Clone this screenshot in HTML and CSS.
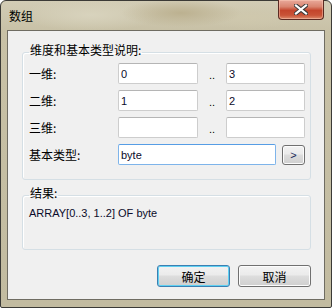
FILE: index.html
```html
<!DOCTYPE html>
<html lang="zh">
<head>
    <meta charset="UTF-8">
    <title>数组</title>
    <link rel="stylesheet" href="styles.css">
</head>
<body>
    <div class="window">
        <!-- Title bar -->
        <header class="titlebar">
            <span class="title">数组</span>
            <button class="close-btn" aria-label="关闭">
                <svg width="14" height="11" viewBox="0 0 14 11">
                    <path d="M2 1.5 L12 9.5 M12 1.5 L2 9.5" stroke="#3a3a3a" stroke-width="4.2" stroke-linecap="square"/>
                    <path d="M2 1.5 L12 9.5 M12 1.5 L2 9.5" stroke="#ffffff" stroke-width="2.2" stroke-linecap="square"/>
                </svg>
            </button>
        </header>

        <!-- Client area -->
        <main class="client">
            <fieldset class="group">
                <legend>维度和基本类型说明:</legend>
                <div class="dim-grid">
                    <label>一维:</label>
                    <input class="box" type="text" value="0">
                    <span class="dots">..</span>
                    <input class="box" type="text" value="3">

                    <label>二维:</label>
                    <input class="box" type="text" value="1">
                    <span class="dots">..</span>
                    <input class="box" type="text" value="2">

                    <label>三维:</label>
                    <input class="box" type="text" value="">
                    <span class="dots">..</span>
                    <input class="box" type="text" value="">

                    <label>基本类型:</label>
                    <div class="type-row">
                        <input class="box focused" type="text" value="byte">
                        <button class="btn small-btn">&gt;</button>
                    </div>
                </div>
            </fieldset>

            <fieldset class="group result">
                <legend>结果:</legend>
                <p class="result-text">ARRAY[0..3, 1..2] OF byte</p>
            </fieldset>

            <div class="actions">
                <button class="btn default-btn">确定</button>
                <button class="btn">取消</button>
            </div>
        </main>
    </div>
</body>
</html>
```

FILE: styles.css
```css
/* General styles */
body {
    margin: 0;
    font-family: "Noto Sans CJK SC", sans-serif;
    font-size: 12px;
    color: #000;
}

/* Window frame */
.window {
    width: 332px;
    height: 308px;
    box-sizing: border-box;
    border: 1px solid #3b3a36;
    border-radius: 6px 6px 2px 2px;
    padding: 0 6px 7px 6px;
    display: flex;
    flex-direction: column;
    background:
        radial-gradient(ellipse 60px 14px at 180px 12px, #bcb190 0%, rgba(188, 177, 144, 0) 100%),
        radial-gradient(ellipse 70px 16px at 90px 14px, #d8d3bd 0%, rgba(216, 211, 189, 0) 100%),
        radial-gradient(ellipse 50px 12px at 250px 16px, #cfc8ad 0%, rgba(207, 200, 173, 0) 100%),
        linear-gradient(#d2ccb5, #c8c1a6 30px, #c2bba0);
}

/* Title bar */
.titlebar {
    height: 29px;
    display: flex;
    align-items: flex-start;
}

.title {
    margin: 7px 0 0 2px;
    line-height: 16px;
    font-size: 12px;
}

.close-btn {
    margin-left: auto;
    margin-top: -1px;
    margin-right: 1px;
    width: 46px;
    height: 20px;
    padding: 0;
    border: 1px solid #5b2a22;
    border-top: none;
    border-radius: 0 0 4px 4px;
    display: flex;
    align-items: center;
    justify-content: center;
    background: linear-gradient(#e9a99b, #d98570 35%, #c4452c 55%, #c95337 80%, #dc8a6b);
    box-shadow: inset 0 0 0 1px rgba(255, 210, 190, 0.45);
}

/* Client area */
.client {
    flex: 1;
    border: 1px solid #6f6c62;
    background-color: #f0f0f0;
    padding: 11px 13px 0 14px;
    display: flex;
    flex-direction: column;
}

/* Group boxes */
.group {
    margin: 0;
    border: 1px solid #d5dfe5;
    border-radius: 3px;
    box-shadow: inset 1px 1px 0 #fff;
    padding: 1px 5px 14px 6px;
}

.group legend {
    padding: 0 1px 4px;
    line-height: 16px;
}

.dim-grid {
    display: grid;
    grid-template-columns: 89px 80px 28px 79px;
    grid-auto-rows: 21px;
    row-gap: 6px;
    align-items: center;
}

.dim-grid label {
    line-height: 16px;
}

.dots {
    font-family: "Liberation Sans", sans-serif;
    font-size: 11px;
    text-align: center;
    padding-top: 3px;
}

.box {
    box-sizing: border-box;
    width: 100%;
    height: 21px;
    margin: 0;
    padding: 0 2px;
    border: 1px solid #cdcdcd;
    border-top-color: #b5b5b5;
    border-radius: 2px;
    background: #fff;
    font-family: "Liberation Sans", sans-serif;
    font-size: 11px;
    color: #0b0b2a;
    outline: none;
}

.box.focused {
    border-color: #7eb4ea;
    border-top-color: #569de5;
}

.type-row {
    grid-column: 2 / 5;
    display: flex;
    align-items: center;
    gap: 6px;
}

.type-row .box {
    width: 158px;
}

/* Buttons */
.btn {
    box-sizing: border-box;
    width: 73px;
    height: 22px;
    padding: 0;
    border: 1px solid #707070;
    border-radius: 3px;
    background: linear-gradient(#f2f2f2, #ebebeb 45%, #dddddd 50%, #cfcfcf);
    box-shadow: inset 0 0 0 1px #fcfcfc;
    font-family: "Noto Sans CJK SC", sans-serif;
    font-size: 12px;
    color: #000;
}

.small-btn {
    width: 23px;
    height: 20px;
    font-family: "Liberation Sans", sans-serif;
    font-size: 11px;
    color: #1a2a5a;
}

.default-btn {
    border-color: #3c7fb1;
    box-shadow: inset 0 0 0 1px #5fd0f2;
}

/* Result group */
.result {
    margin-top: 5px;
    padding-top: 0;
    padding-bottom: 0;
    height: 65px;
    box-sizing: border-box;
}

.result-text {
    margin: 0;
    line-height: 16px;
    font-family: "Liberation Sans", sans-serif;
    font-size: 11px;
    color: #0b0b2a;
}

.actions {
    margin-top: 15px;
    display: flex;
    justify-content: flex-end;
    gap: 8px;
}
```
